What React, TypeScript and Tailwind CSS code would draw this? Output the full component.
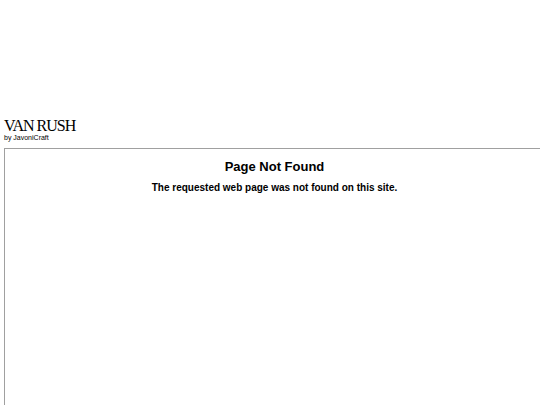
import React from 'react'

const App = () => {
  return (
    <div className="w-[540px] h-[405px] overflow-hidden bg-white">
      <div className="pt-[117px] pl-[4px]">
        <p className="text-[16px] leading-[17px] tracking-[-1px] text-black font-['Liberation_Serif',serif]">
          VAN RUSH
        </p>
        <p className="text-[7px] leading-[8px] text-black font-['Liberation_Sans',sans-serif]">
          by JavoniCraft
        </p>
      </div>
      <div className="mt-[6px] ml-[4px] w-[540px] h-[300px] border-t border-l border-[#a0a0a0] font-['Liberation_Sans',sans-serif] text-center">
        <p className="pt-[10px] text-[13px] leading-[15px] font-bold text-black">Page Not Found</p>
        <p className="mt-[8px] text-[10px] leading-[12px] font-bold text-black">
          The requested web page was not found on this site.
        </p>
      </div>
    </div>
  )
}

export default App
